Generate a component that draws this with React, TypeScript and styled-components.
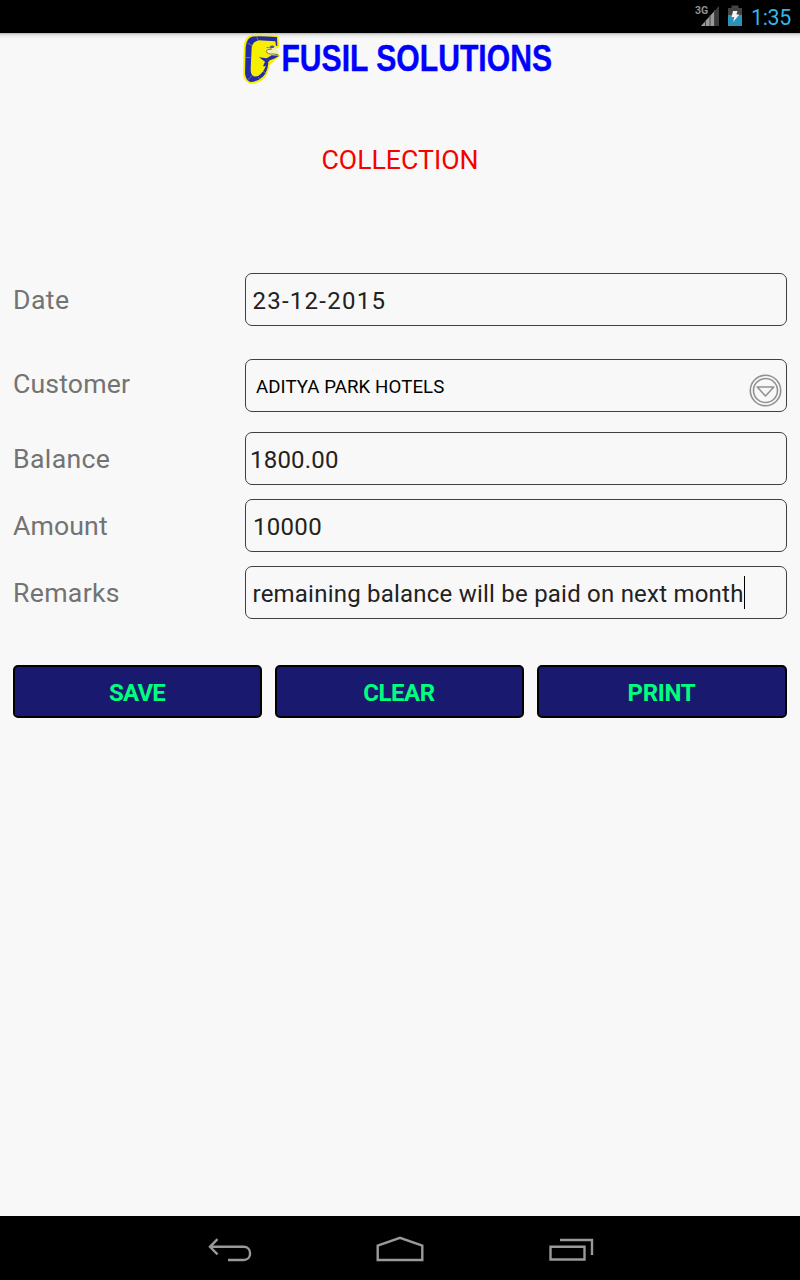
import React from "react";
import styled, { createGlobalStyle } from "styled-components";

const GlobalStyle = createGlobalStyle`
  *, *::before, *::after { box-sizing: border-box; }
  body { margin: 0; background: #f8f8f8; font-family: Roboto, sans-serif; }
`;

const Screen = styled.div`
  display: flex;
  flex-direction: column;
  width: 800px;
  height: 1280px;
  overflow: hidden;
  background: #f8f8f8;
`;

const StatusBar = styled.header`
  display: flex;
  align-items: center;
  justify-content: flex-end;
  height: 33px;
  flex: none;
  padding-right: 9px;
  background: #000;
`;

const Clock = styled.time`
  margin: 2px 0 0 9px;
  font-size: 21.33px;
  line-height: 25px;
  letter-spacing: -0.3px;
  color: #33b5e5;
`;

const Content = styled.main`
  display: flex;
  flex-direction: column;
  flex: 1;
  padding: 0 13px;
  background: linear-gradient(#b4b4b4 0, #e4e4e4 2px, #f0f0f0 4px, #f8f8f8 6px);
`;

const Brand = styled.div`
  display: flex;
  height: 60px;
  margin-left: 222px;
`;

const Title = styled.h1`
  margin: 51px 0 97px;
  font-size: 26.67px;
  line-height: 32px;
  font-weight: 400;
  text-align: center;
  color: #f60000;
`;

const Row = styled.label<{ $gap: number }>`
  display: grid;
  grid-template-columns: 232px 1fr;
  margin-bottom: ${(p) => p.$gap}px;
`;

const Label = styled.span<{ $top: number; $spacing: number }>`
  padding-top: ${(p) => p.$top}px;
  font-size: 26.67px;
  line-height: 32px;
  letter-spacing: ${(p) => p.$spacing}px;
  color: #737373;
`;

const Field = styled.div<{ $inset: number; $small?: boolean }>`
  display: flex;
  align-items: center;
  height: 53px;
  padding: 2px 4px 0 ${(p) => p.$inset}px;
  border: 1px solid #404040;
  border-radius: 7px;
  font-size: ${(p) => (p.$small ? "18.67px" : "24px")};
  color: ${(p) => (p.$small ? "#000" : "#222")};
`;

const Value = styled.span<{ $spacing: number }>`
  white-space: nowrap;
  letter-spacing: ${(p) => p.$spacing}px;
`;

const Caret = styled.i`
  width: 1px;
  height: 33px;
  margin-top: -2px;
  background: #000;
`;

const DropIcon = styled.svg`
  margin: 8px 0 0 auto;
`;

const Actions = styled.div`
  display: grid;
  grid-template-columns: 249px 249px 250px;
  gap: 13px;
  margin-top: 46px;
`;

const Button = styled.button<{ $spacing: number }>`
  height: 53px;
  padding: 2px 1px 0 0;
  border: 2px solid #000;
  border-radius: 5px;
  background: #191970;
  color: #00ff7f;
  font: 700 24px Roboto, sans-serif;
  letter-spacing: ${(p) => p.$spacing}px;
`;

const NavBar = styled.nav`
  display: flex;
  justify-content: center;
  height: 64px;
  flex: none;
  background: #000;
`;

const BatterySvg = styled.svg`
  margin-left: 8px;
`;

const SignalIcon = () => (
  <svg width="25" height="33" viewBox="0 0 25 33">
    <text x="0" y="14" fontSize="10.5" fontWeight="700" fontFamily="Roboto, sans-serif" fill="#909090">3G</text>
    <path d="M6 26 24 6V26Z" fill="#3b3b3b" />
    <path d="M6 26 19.5 11V26Z" fill="#9a9a9a" />
    <path d="M10.5 20V26M15 15V26M19.5 10V26" stroke="#444" strokeWidth="1" />
  </svg>
);

const BatteryIcon = () => (
  <BatterySvg width="14" height="33" viewBox="0 0 14 33">
    <path d="M0 8H3.5V5.5H10.5V8H14V26H0Z" fill="#444" />
    <path d="M0 15H14V26H0Z" fill="#2b93b8" />
    <path d="M5 11H9.5L8.4 14.5H11.4L5.2 22 6.3 17H3.6Z" fill="#f4f4f4" />
  </BatterySvg>
);

const Logo = () => (
  <svg width="400" height="60" viewBox="0 0 400 60" role="img" aria-label="Fusil Solutions">
    <g transform="translate(5 -1) scale(.33333)" strokeLinejoin="round">
      <path d="M34 12Q50 9 113 13L114 44 104 48 116 71 98 87 86 98Q84 118 73 135Q55 153 30 152Q14 147 12 125L14 45Q16 18 34 12Z" fill="#f8ee00" stroke="#f8ee00" strokeWidth="6" />
      <path d="M36 14Q52 11 111 15L112 42 108 41 106 28 56 25Q38 29 35 46L32 112Q32 129 41 133Q53 136 62 126Q76 112 80 92L85 93Q82 119 70 133Q53 150 31 150Q17 145 15 124L17 46Q19 19 36 14Z" fill="#222aad" />
      <path d="M80 49Q92 41 110 45L117 70 94 70 82 65Z" fill="#f4efb0" />
      <path d="M57 76 80 79 95 70 118 71 102 80 89 85 76 103 69 103 75 89Z" fill="#222aad" />
      <path d="M80 47Q95 46 94 52Q79 51 79 59Q82 68 101 66L114 68" fill="none" stroke="#77772e" strokeWidth="3" />
      <path d="M90 43Q97 37 104 44L100 48H91Z" fill="#4b5292" />
      <path d="M14 76 32 77M22 33 38 42M49 12 55 26M23 144 37 130M54 136 61 143M69 118 80 124" stroke="#9a984c" strokeWidth="2" />
    </g>
    <text x="46.4" y="38" fontFamily="'Liberation Sans', Arial, sans-serif" fontWeight="700" fontSize="36.5" textLength="270.6" lengthAdjust="spacingAndGlyphs" fill="#00f" stroke="#00f" strokeWidth=".4">FUSIL SOLUTIONS</text>
  </svg>
);

const Dropdown = () => (
  <DropIcon width="33" height="33" viewBox="0 0 33 33" fill="none" stroke="#929292">
    <circle cx="16.5" cy="16.5" r="15.2" strokeWidth="1.6" />
    <circle cx="16.5" cy="16.5" r="12" strokeWidth="1.6" />
    <path d="M8.2 13H24.8L16.5 22Z" strokeWidth="1.6" strokeLinejoin="round" />
  </DropIcon>
);

const NavIcons = () => (
  <svg width="400" height="64" viewBox="200 1216 400 64" fill="none" stroke="#999" strokeWidth="2.4">
    <path d="M228 1260H243.5C252.3 1260 252.3 1246.8 243.5 1246.8H211M217.5 1239.2 210 1246.8 217.5 1254.4" />
    <path d="M377.7 1260V1245.5L400 1237.8 422.3 1245.5V1260Z" />
    <path d="M550.5 1246.7H584.5V1259.5H550.5ZM560 1240H592V1255" />
  </svg>
);

const rows = [
  { label: "Date", value: "23-12-2015", gap: 33, top: 11, inset: 6.5, ls: 0.4, vs: 1.25 },
  { label: "Customer", value: "ADITYA PARK HOTELS", gap: 20, top: 9, inset: 10, ls: 0.15, vs: 0.08, select: true },
  { label: "Balance", value: "1800.00", gap: 14, top: 11, inset: 4, ls: 0.35, vs: 0.2 },
  { label: "Amount", value: "10000", gap: 14, top: 11, inset: 7, ls: 0.1, vs: 0.3 },
  { label: "Remarks", value: "remaining balance will be paid on next month", gap: 0, top: 11, inset: 6.5, ls: 0.3, vs: 0.22, active: true },
];

export default function App() {
  return (
    <Screen>
      <GlobalStyle />
      <StatusBar>
        <SignalIcon />
        <BatteryIcon />
        <Clock>1:35</Clock>
      </StatusBar>
      <Content>
        <Brand><Logo /></Brand>
        <Title>COLLECTION</Title>
        {rows.map((r) => (
          <Row key={r.label} $gap={r.gap}>
            <Label $top={r.top} $spacing={r.ls}>{r.label}</Label>
            <Field $inset={r.inset} $small={r.select}>
              <Value $spacing={r.vs}>{r.value}</Value>
              {r.active && <Caret />}
              {r.select && <Dropdown />}
            </Field>
          </Row>
        ))}
        <Actions>
          <Button $spacing={-0.8}>SAVE</Button>
          <Button $spacing={-0.45}>CLEAR</Button>
          <Button $spacing={-0.3}>PRINT</Button>
        </Actions>
      </Content>
      <NavBar><NavIcons /></NavBar>
    </Screen>
  );
}
